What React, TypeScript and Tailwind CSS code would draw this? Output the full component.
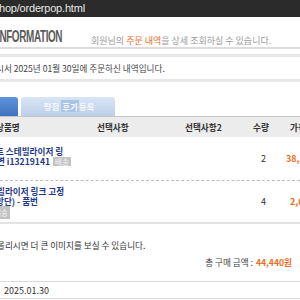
import React from "react";

const kr = { fontFamily: '"Noto Sans CJK KR", "Noto Sans", sans-serif' };
const lat = { fontFamily: '"Liberation Sans", Arial, sans-serif' };

export default function App() {
  return (
    <div className="w-[300px] h-[300px] overflow-hidden bg-white relative" style={kr}>
      {/* top url bar */}
      <div className="h-[17px] bg-[#2b2b2b] flex items-center">
        <span className="text-[11px] leading-none text-[#e6e6e6] -ml-[1px] tracking-[-0.2px]" style={lat}>
          hop/orderpop.html
        </span>
      </div>
      {/* header */}
      <div className="mt-[14px] h-[18px] flex items-end border-b-2 border-[#dcdcdc] whitespace-nowrap">
        <div className="w-[91px] shrink-0 h-[18px] relative">
          <span
            className="absolute left-[-3px] bottom-[2px] origin-left scale-x-[0.62] text-[16px] leading-none font-bold text-[#5a5a5a] tracking-[-0.6px]"
            style={lat}
          >
            INFORMATION
          </span>
        </div>
        <span className="mb-[2px] text-[9px] leading-none text-[#9a9a9a]">
          회원님의 <span className="text-[#f26b1d]">주문 내역</span>을 상세 조회하실 수 있습니다.
        </span>
      </div>
      {/* info box */}
      <div className="mt-[5px] h-[28px] border-t-[3px] border-b-[3px] border-[#e8e8e8] flex items-center">
        <span className="text-[8.6px] leading-none text-[#444] whitespace-nowrap -ml-[4px] pt-[1px]">
          시서 2025년 01월 30일에 주문하신 내역입니다.
        </span>
      </div>
      {/* tabs */}
      <div className="mt-[15px] h-[19px] flex items-end gap-[3px]">
        <div className="w-[18px] h-[19px] rounded-tr-[3px] bg-gradient-to-b from-[#5f93da] to-[#3e73bd]" />
        <div className="w-[94px] h-[19px] rounded-t-[3px] bg-gradient-to-b from-[#d8e5f6] to-[#bccfea] flex items-center justify-center">
          <span className="text-[8.5px] leading-none text-[#f4f8ff] font-bold ml-[2px]">
            평점 <span className="text-[#ffffff] bg-[#abc3e6] px-[1px]">후기</span>등록
          </span>
        </div>
      </div>
      {/* table header */}
      <div className="h-[21px] bg-[#ececec] border-t border-[#c4c4c4] flex items-center text-[8.6px] font-bold text-[#333] leading-none whitespace-nowrap">
        <div className="w-[97px] shrink-0"><span className="-ml-[4px] inline-block">상품명</span></div>
        <div className="w-[88px] shrink-0">선택사항</div>
        <div className="w-[68px] shrink-0">선택사항2</div>
        <div className="w-[37px] shrink-0">수량</div>
        <div className="shrink-0">가격</div>
      </div>
      {/* row 1 */}
      <div className="h-[44px] border-b border-dashed border-[#bdbdbd] flex items-center whitespace-nowrap">
        <div className="w-[253px] shrink-0 text-[8.6px] leading-[9px] text-[#1f3a8a] font-bold pb-[4px]">
          <div className="-ml-[4px]">트 스테빌라이저 링</div>
          <div className="flex items-center -ml-[3px] mt-[1px]">
            <span>변 i13219141</span>
            <span className="ml-[3px] bg-[#c2c2c2] text-[#f2f2f2] text-[7.5px] leading-none px-[2px] py-[1px] font-normal">배송</span>
          </div>
        </div>
        <div className="w-[33px] shrink-0 text-[9px] text-[#333] pl-[8px]">2</div>
        <div className="shrink-0 text-[9px] font-bold text-[#f26b1d]">38,500원</div>
      </div>
      {/* row 2 */}
      <div className="h-[41px] flex items-center whitespace-nowrap">
        <div className="w-[253px] shrink-0 text-[8.6px] leading-[10px] text-[#1f3a8a] font-bold">
          <div className="-ml-[3px]">빌라이저 링크 고정</div>
          <div className="-ml-[4px]">방단) - 품번</div>
          <div className="mt-[1px] -ml-[8px]">
            <span className="bg-[#c2c2c2] text-[#f2f2f2] text-[7.5px] leading-none px-[2px] py-[1px] font-normal">배송</span>
          </div>
        </div>
        <div className="w-[37px] shrink-0 text-[9px] text-[#333] pl-[8px]">4</div>
        <div className="shrink-0 text-[9px] font-bold text-[#f26b1d]">2,000원</div>
      </div>
      {/* footer */}
      <div className="border-t-2 border-[#e3e3e3]">
        <div className="pt-[17px] text-[8.6px] leading-none text-[#333] whitespace-nowrap -ml-[3px]">
          올리시면 더 큰 이미지를 보실 수 있습니다.
        </div>
        <div className="mt-[8px] flex justify-end pr-[8px] text-[8.6px] leading-none whitespace-nowrap">
          <span className="text-[#444]">총 구매 금액 :</span>
          <span className="text-[#f26b1d] font-bold ml-[3px]">44,440원</span>
        </div>
      </div>
      <div className="mt-[15px] border-t border-[#dadada] h-[17px] flex items-center">
        <span className="text-[9px] leading-none text-[#333] ml-[4px]">
          2025.01.30
        </span>
      </div>
      <div className="border-t border-[#dadada]" />
    </div>
  );
}
